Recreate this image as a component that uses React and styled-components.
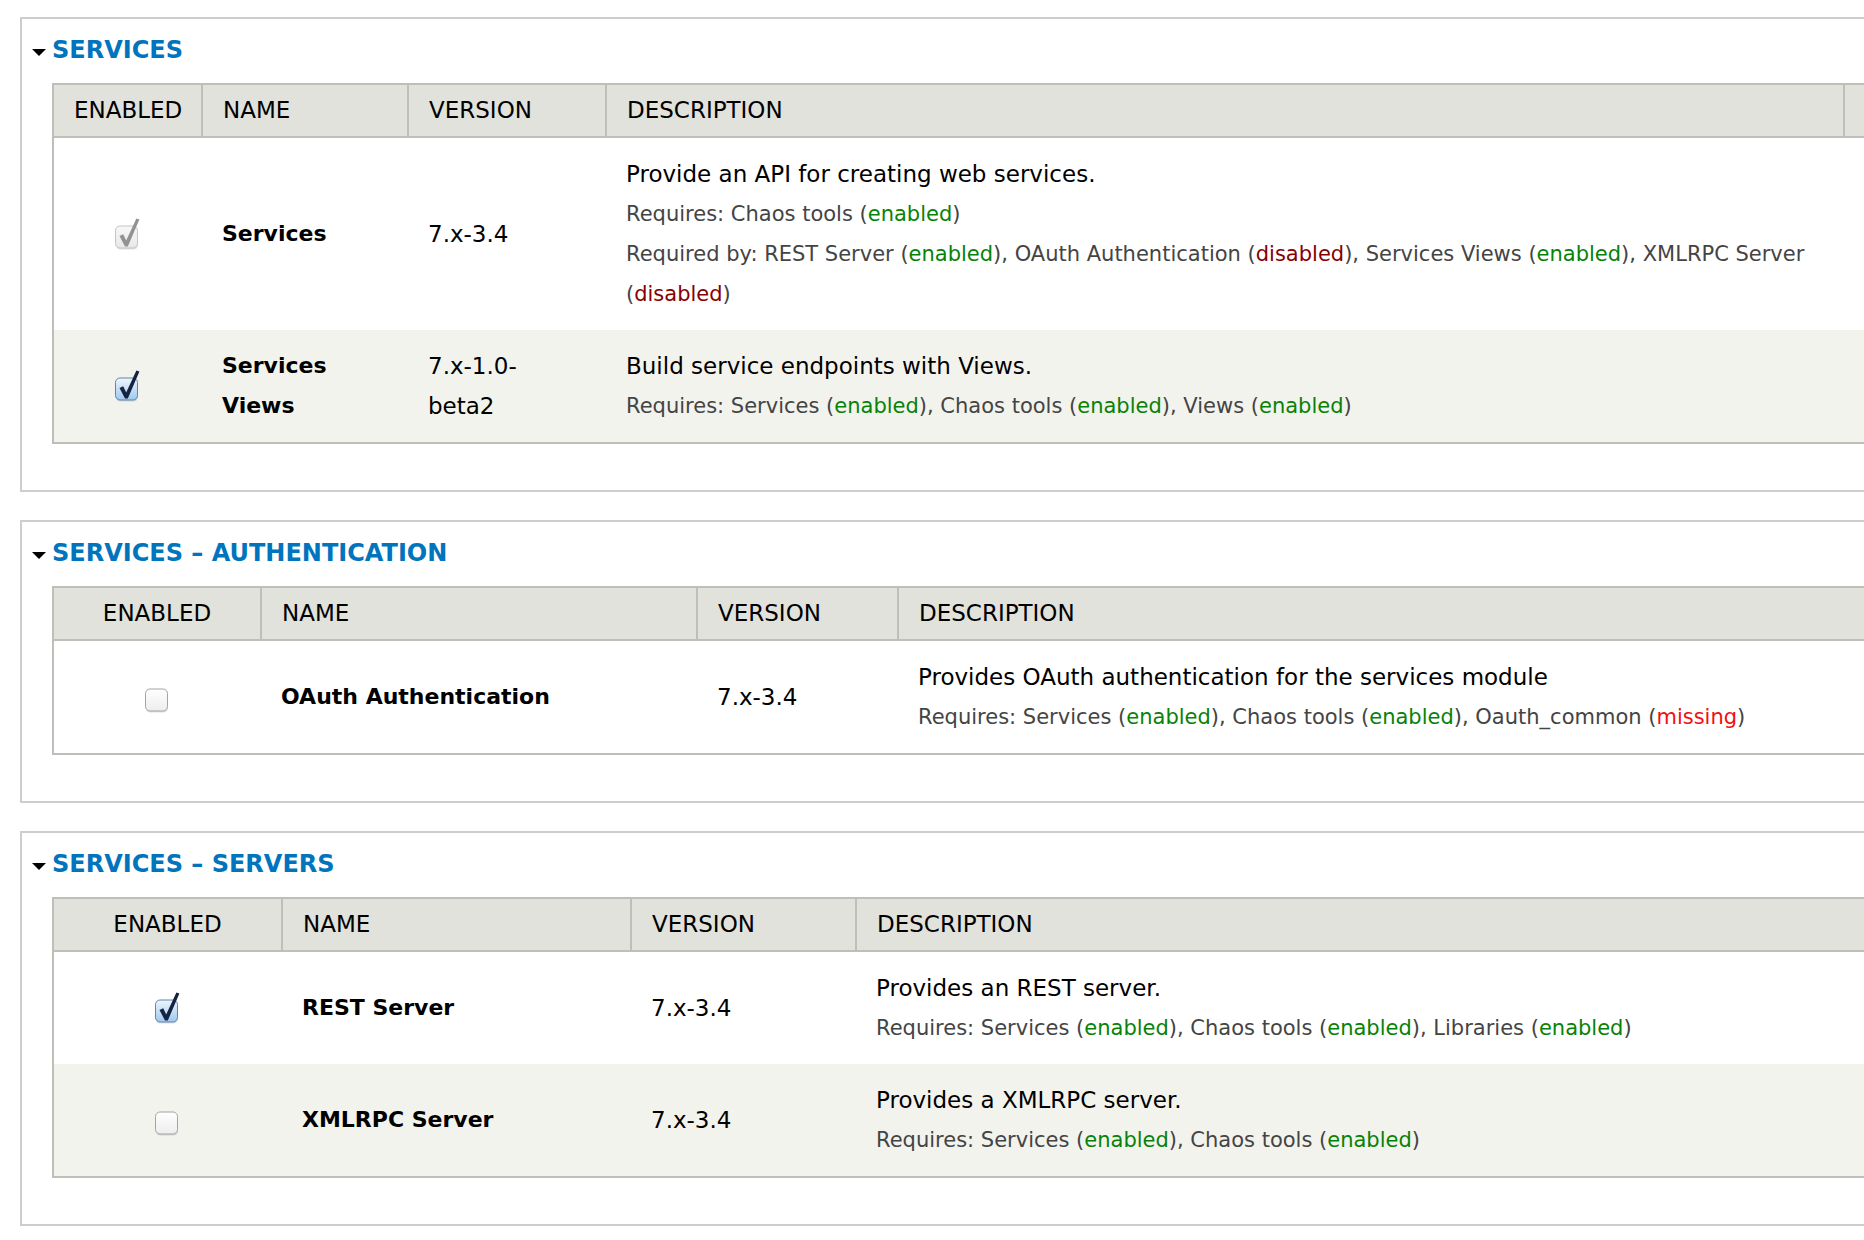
import React from 'react';
import styled, { createGlobalStyle } from 'styled-components';

const GlobalStyle = createGlobalStyle`
  html, body {
    margin: 0;
    padding: 0;
    background: #fff;
    overflow: hidden;
  }
  body {
    font-family: "DejaVu Sans", Verdana, sans-serif;
    color: #000;
  }
`;

const modules = [
  {
    title: 'Services',
    cols: [149, 206, 198, 1238, 250],
    rows: [
      {
        state: 'locked',
        name: 'Services',
        version: '7.x-3.4',
        desc: 'Provide an API for creating web services.',
        requires: [['Chaos tools', 'enabled']],
        requiredBy: [
          ['REST Server', 'enabled'],
          ['OAuth Authentication', 'disabled'],
          ['Services Views', 'enabled'],
          ['XMLRPC Server', 'disabled'],
        ],
      },
      {
        state: 'on',
        name: 'Services Views',
        version: '7.x-1.0-beta2',
        desc: 'Build service endpoints with Views.',
        requires: [['Services', 'enabled'], ['Chaos tools', 'enabled'], ['Views', 'enabled']],
      },
    ],
  },
  {
    title: 'Services – Authentication',
    cols: [208, 436, 201, 1100, 250],
    rows: [
      {
        state: 'off',
        name: 'OAuth Authentication',
        version: '7.x-3.4',
        desc: 'Provides OAuth authentication for the services module',
        requires: [['Services', 'enabled'], ['Chaos tools', 'enabled'], ['Oauth_common', 'missing']],
      },
    ],
  },
  {
    title: 'Services – Servers',
    cols: [229, 349, 225, 1100, 250],
    rows: [
      {
        state: 'on',
        name: 'REST Server',
        version: '7.x-3.4',
        desc: 'Provides an REST server.',
        requires: [['Services', 'enabled'], ['Chaos tools', 'enabled'], ['Libraries', 'enabled']],
      },
      {
        state: 'off',
        name: 'XMLRPC Server',
        version: '7.x-3.4',
        desc: 'Provides a XMLRPC server.',
        requires: [['Services', 'enabled'], ['Chaos tools', 'enabled']],
      },
    ],
  },
];

const CheckBox = ({ state }) => {
  const fill = state === 'on' ? 'url(#cb-on)' : state === 'locked' ? 'url(#cb-locked)' : 'url(#cb-off)';
  const stroke = state === 'on' ? '#5f84ae' : state === 'locked' ? '#c4c4c4' : '#a3a3a3';
  const tick = state === 'on' ? '#132340' : '#929292';
  return (
    <CheckSvg viewBox="0 0 30 33" width="30" height="33">
      <defs>
        <linearGradient id="cb-on" x1="0" y1="0" x2="0" y2="1">
          <stop offset="0" stopColor="#eef6fe" />
          <stop offset="1" stopColor="#9fc8f0" />
        </linearGradient>
        <linearGradient id="cb-locked" x1="0" y1="0" x2="0" y2="1">
          <stop offset="0" stopColor="#f8f8f8" />
          <stop offset="1" stopColor="#e8e8e8" />
        </linearGradient>
        <linearGradient id="cb-off" x1="0" y1="0" x2="0" y2="1">
          <stop offset="0" stopColor="#ffffff" />
          <stop offset="1" stopColor="#ededed" />
        </linearGradient>
      </defs>
      <rect x="3" y="10.5" width="22" height="22" rx="4.5" fill="#000" opacity="0.12" />
      <rect x="2.5" y="9" width="22" height="22" rx="4.5" fill={fill} stroke={stroke} />
      {state !== 'off' && (
        <path d="M6.5 19 L10.2 17.2 L13.2 23.5 L23.4 1.4 L26.4 2.6 L14.8 29.5 L12 29.5 Z" fill={tick} />
      )}
    </CheckSvg>
  );
};

const Status = ({ value }) => <StatusText $status={value}>{value}</StatusText>;

const DepList = ({ label, items }) => (
  <Requirement>
    {label}:{' '}
    {items.map(([name, status], i) => (
      <React.Fragment key={name}>
        {name} (<Status value={status} />){i < items.length - 1 ? ', ' : ''}
      </React.Fragment>
    ))}
  </Requirement>
);

const ModuleTable = ({ cols, rows }) => (
  <Table $width={cols.reduce((a, b) => a + b, 0)}>
    <colgroup>
      {cols.map((w, i) => (
        <Col key={i} $w={w} />
      ))}
    </colgroup>
    <thead>
      <tr>
        <Th $center>Enabled</Th>
        <Th>Name</Th>
        <Th>Version</Th>
        <Th>Description</Th>
        <Th />
      </tr>
    </thead>
    <tbody>
      {rows.map((row, i) => (
        <Row key={row.name} $even={i % 2 === 1}>
          <CheckCell>
            <CheckBox state={row.state} />
          </CheckCell>
          <NameCell>{row.name}</NameCell>
          <VersionCell>{row.version}</VersionCell>
          <DescCell>
            <DescText>{row.desc}</DescText>
            {row.requires && <DepList label="Requires" items={row.requires} />}
            {row.requiredBy && <DepList label="Required by" items={row.requiredBy} />}
          </DescCell>
          <Td />
        </Row>
      ))}
    </tbody>
  </Table>
);

const App = () => (
  <>
    <GlobalStyle />
    <Page>
      {modules.map((group) => (
        <Panel key={group.title}>
          <Legend>
            <Arrow />
            <LegendText>{group.title}</LegendText>
          </Legend>
          <ModuleTable cols={group.cols} rows={group.rows} />
        </Panel>
      ))}
    </Page>
  </>
);

export default App;

const Page = styled.div`
  width: 2200px;
  padding: 17px 0 0 20px;
  display: flex;
  flex-direction: column;
  gap: 28px;
`;

const Panel = styled.section`
  border: 2px solid #cdcdcd;
  padding: 13px 0 46px 30px;
`;

const Legend = styled.div`
  display: flex;
  align-items: center;
  gap: 6px;
  height: 36px;
  margin: 0 0 15px -20px;
`;

const Arrow = styled.span`
  width: 0;
  height: 0;
  margin-top: 4px;
  border-left: 7px solid transparent;
  border-right: 7px solid transparent;
  border-top: 7px solid #000;
`;

const LegendText = styled.span`
  font-size: 24px;
  font-weight: bold;
  text-transform: uppercase;
  color: #0074bd;
  line-height: 36px;
`;

const Table = styled.table`
  border-collapse: collapse;
  table-layout: fixed;
  width: ${(p) => p.$width}px;
  border-left: 2px solid #bebfb9;
  border-bottom: 2px solid #bebfb9;
`;

const Col = styled.col`
  width: ${(p) => p.$w}px;
`;

const Th = styled.th`
  background: #e1e2dc;
  border-top: 2px solid #bebfb9;
  border-bottom: 2px solid #bebfb9;
  border-right: 2px solid #bebfb9;
  padding: 6px 20px;
  line-height: 39px;
  font-size: 23px;
  font-weight: normal;
  text-transform: uppercase;
  text-align: ${(p) => (p.$center ? 'center' : 'left')};
  color: #000;
  white-space: nowrap;
`;

const Row = styled.tr`
  background: ${(p) => (p.$even ? '#f3f3ee' : '#fff')};
`;

const Td = styled.td`
  padding: 16px 20px;
  vertical-align: middle;
  font-size: 23px;
  line-height: 40px;
  color: #000;
`;

const CheckCell = styled(Td)`
  text-align: center;
  padding: 16px 0;
`;

const CheckSvg = styled.svg`
  display: inline-block;
  vertical-align: middle;
  margin-top: -5px;
`;

const NameCell = styled(Td)`
  font-size: 22px;
  font-weight: bold;
`;

const VersionCell = styled(Td)`
  padding-right: 32px;
`;

const DescCell = styled(Td)`
  padding-right: 22px;
`;

const DescText = styled.div`
  color: #000;
`;

const Requirement = styled.div`
  font-size: 21px;
  color: #444;
`;

const StatusText = styled.span`
  color: ${(p) => (p.$status === 'enabled' ? '#078207' : p.$status === 'disabled' ? '#880000' : '#f01010')};
`;
